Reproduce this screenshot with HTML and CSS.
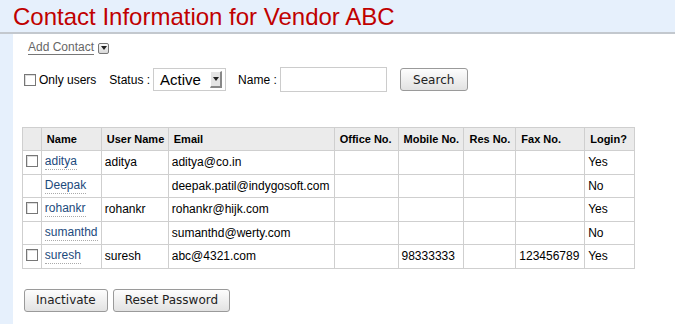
FILE: index.html
```html
<!DOCTYPE html>
<html lang="en">
<head>
    <meta charset="UTF-8">
    <meta name="viewport" content="width=device-width, initial-scale=1.0">
    <title>Contact Information</title>
    <link rel="stylesheet" href="styles.css">
</head>
<body>
    <h1 class="title">Contact Information for Vendor ABC</h1>
    <div class="panel">
        <div class="add-row">
            <a href="#" class="add-link">Add Contact</a>
            <span class="menu-btn"><span class="menu-arrow"></span></span>
        </div>

        <div class="filters">
            <label class="only-users"><span class="check"></span>Only users</label>
            <span class="lbl status-lbl">Status :</span>
            <div class="fake-select">
                <span class="sel-text">Active</span>
                <span class="sel-btn"><span class="menu-arrow"></span></span>
            </div>
            <span class="lbl name-lbl">Name :</span>
            <input type="text" class="name-input">
            <button class="btn search-btn">Search</button>
        </div>

        <table class="contacts">
            <thead>
                <tr>
                    <th class="c-chk"></th>
                    <th class="c-name">Name</th>
                    <th class="c-user">User Name</th>
                    <th class="c-mail">Email</th>
                    <th class="c-off">Office No.</th>
                    <th class="c-mob">Mobile No.</th>
                    <th class="c-res">Res No.</th>
                    <th class="c-fax">Fax No.</th>
                    <th class="c-login">Login?</th>
                </tr>
            </thead>
            <tbody>
                <tr>
                    <td class="chk-cell"><span class="check"></span></td>
                    <td><a href="#" class="person">aditya</a></td>
                    <td>aditya</td>
                    <td>aditya@co.in</td>
                    <td></td><td></td><td></td><td></td>
                    <td>Yes</td>
                </tr>
                <tr>
                    <td class="chk-cell"></td>
                    <td><a href="#" class="person">Deepak</a></td>
                    <td></td>
                    <td>deepak.patil@indygosoft.com</td>
                    <td></td><td></td><td></td><td></td>
                    <td>No</td>
                </tr>
                <tr>
                    <td class="chk-cell"><span class="check"></span></td>
                    <td><a href="#" class="person">rohankr</a></td>
                    <td>rohankr</td>
                    <td>rohankr@hijk.com</td>
                    <td></td><td></td><td></td><td></td>
                    <td>Yes</td>
                </tr>
                <tr>
                    <td class="chk-cell"></td>
                    <td><a href="#" class="person">sumanthd</a></td>
                    <td></td>
                    <td>sumanthd@werty.com</td>
                    <td></td><td></td><td></td><td></td>
                    <td>No</td>
                </tr>
                <tr>
                    <td class="chk-cell"><span class="check"></span></td>
                    <td><a href="#" class="person">suresh</a></td>
                    <td>suresh</td>
                    <td>abc@4321.com</td>
                    <td></td>
                    <td>98333333</td>
                    <td></td>
                    <td>123456789</td>
                    <td>Yes</td>
                </tr>
            </tbody>
        </table>

        <div class="actions">
            <button class="btn">Inactivate</button>
            <button class="btn">Reset Password</button>
        </div>
    </div>
</body>
</html>
```

FILE: styles.css
```css
* {
    box-sizing: border-box;
}

body {
    margin: 0;
    background: #e6f0fc;
    font-family: "Liberation Sans", Arial, sans-serif;
    font-size: 12px;
    color: #000;
    height: 100vh;
    overflow: hidden;
}

.title {
    margin: 0;
    height: 34px;
    padding: 3px 0 0 13px;
    font-size: 24px;
    font-weight: normal;
    color: #c00000;
    line-height: 28px;
    border-bottom: 2px solid #c3c8ce;
}

.panel {
    margin-left: 13px;
    background: #fff;
    height: calc(100vh - 34px);
    padding: 6px 0 0 9px;
}

/* add contact link */
.add-row {
    display: flex;
    align-items: center;
    height: 16px;
    padding-left: 6px;
}

.add-link {
    color: #666;
    text-decoration: none;
    border-bottom: 1px solid #777;
    line-height: 13px;
}

.menu-btn {
    display: inline-flex;
    justify-content: center;
    align-items: center;
    width: 11px;
    height: 11px;
    margin-left: 4px;
    border: 1px solid #777;
    border-radius: 2px;
    background: linear-gradient(#fafafa, #d8d8d8);
}

.menu-arrow {
    width: 0;
    height: 0;
    border-left: 3px solid transparent;
    border-right: 3px solid transparent;
    border-top: 4px solid #222;
}

/* filter row */
.filters {
    display: flex;
    align-items: center;
    margin-top: 11px;
    height: 25px;
    padding-left: 2px;
}

.check {
    display: inline-block;
    width: 12px;
    height: 12px;
    border: 1px solid #777;
    background: #fff;
    box-shadow: inset 1px 1px 0 #ddd;
}

.only-users {
    display: flex;
    align-items: center;
    gap: 3px;
}

.lbl {
    font-size: 12px;
}

.status-lbl {
    margin-left: 13px;
}

.fake-select {
    display: flex;
    align-items: center;
    justify-content: space-between;
    width: 73px;
    height: 23px;
    margin-left: 3px;
    border: 1px solid #ccc;
    padding: 0 3px 0 6px;
    font-size: 15px;
}

.sel-btn {
    display: inline-flex;
    justify-content: center;
    align-items: center;
    width: 12px;
    height: 17px;
    background: #e4e4e4;
    border-right: 2px solid #888;
    border-bottom: 2px solid #888;
    border-top: 1px solid #fff;
    border-left: 1px solid #fff;
}

.name-lbl {
    margin-left: 12px;
}

.name-input {
    width: 107px;
    height: 25px;
    margin: 0 0 0 3px;
    border: 1px solid #ccc;
    padding: 0 4px;
}

.btn {
    font-family: "DejaVu Sans", Verdana, sans-serif;
    font-size: 12px;
    color: #222;
    height: 23px;
    padding: 0 11px;
    border: 1px solid #9a9a9a;
    border-radius: 3px;
    background: linear-gradient(#fdfdfd, #e2e2e2);
}

.search-btn {
    margin-left: 13px;
    width: 68px;
}

/* table */
.contacts {
    margin-top: 35px;
    border-collapse: collapse;
    border: 1px solid #cfcfcf;
    width: 613px;
}

.contacts th,
.contacts td {
    border: 1px solid #cfcfcf;
    height: 23.5px;
    padding: 0 3px;
    text-align: left;
    white-space: nowrap;
}

.contacts th {
    background: #ebebeb;
    font-size: 11px;
    height: 23px;
    padding-left: 5px;
}

.c-chk { width: 19px; }
.c-name { width: 60px; }
.c-user { width: 67px; }
.c-mail { width: 166px; }
.c-off { width: 64px; }
.c-mob { width: 66px; }
.c-res { width: 52px; }
.c-fax { width: 69px; }
.c-login { width: 50px; }

.chk-cell {
    vertical-align: top;
    padding: 4px 0 0 3px !important;
}

.person {
    display: inline-block;
    color: #1c4a7c;
    text-decoration: none;
    line-height: 14px;
    padding-bottom: 1px;
    border-bottom: 1px dotted #aaa;
}

.actions {
    display: flex;
    gap: 5px;
    margin-top: 20px;
    padding-left: 2px;
}
```
